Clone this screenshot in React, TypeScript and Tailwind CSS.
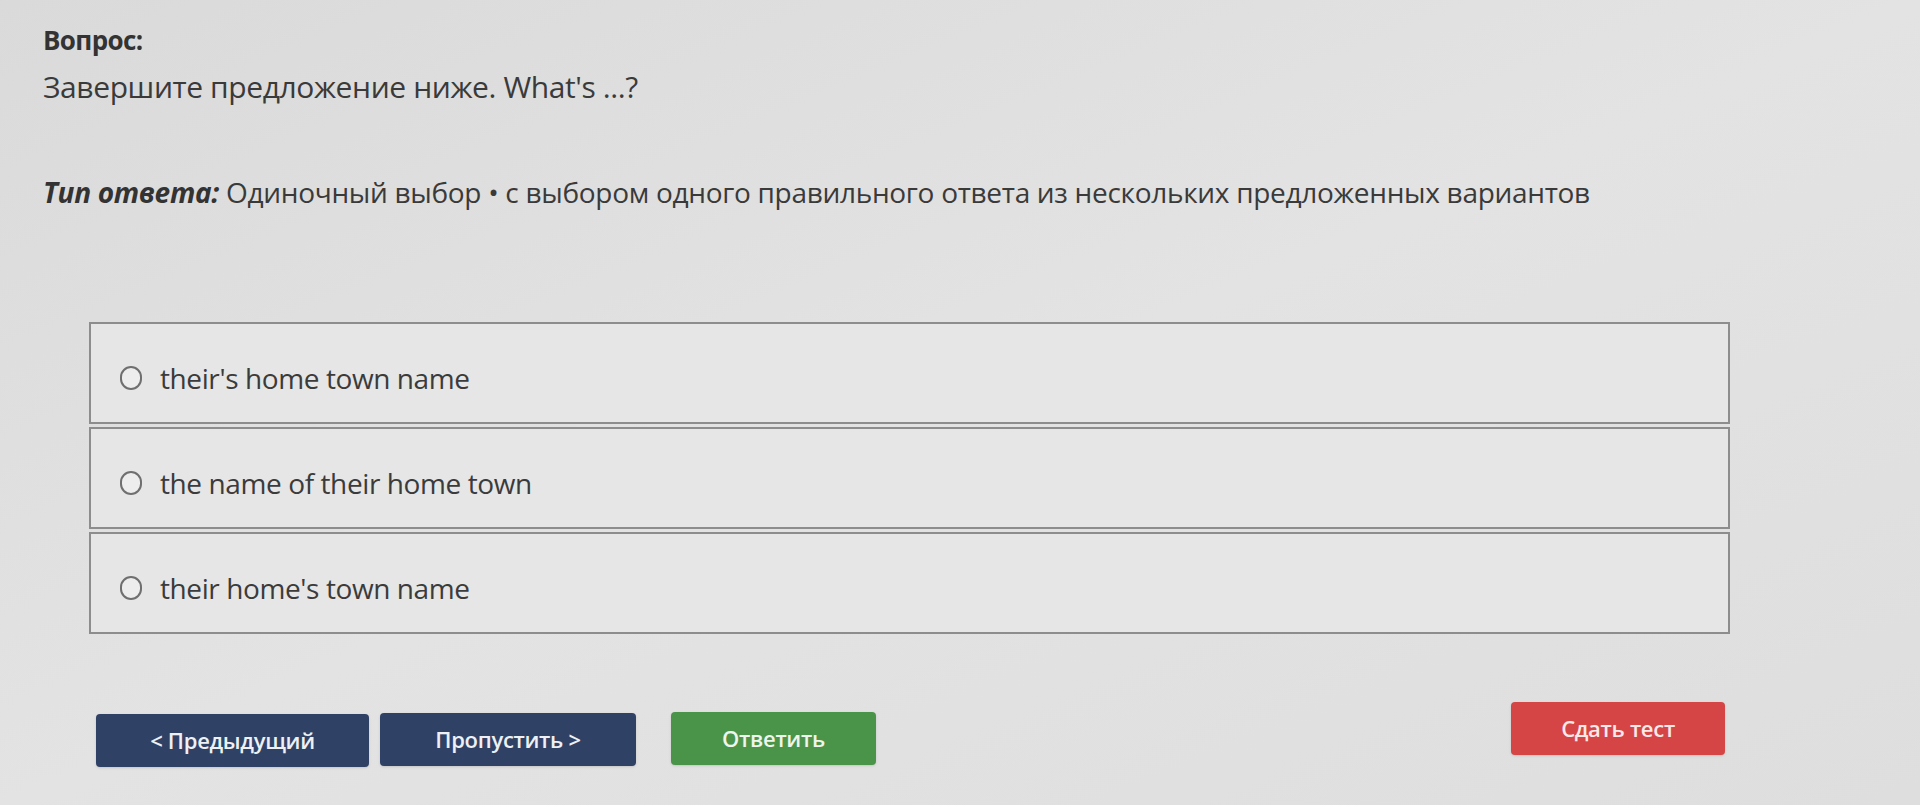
import React from 'react';

const options = [
  "their's home town name",
  'the name of their home town',
  "their home's town name",
];

export default function App() {
  return (
    <div className="w-full h-[805px] overflow-hidden bg-gradient-to-br from-[#dadada] via-[#e3e3e3] to-[#dedede] font-['Open_Sans',sans-serif] text-[#3a3a3a]">
      {/* Question header */}
      <div className="pl-[43px] pt-[24px]">
        <div className="text-[26px] font-bold leading-[32px] text-[#333] tracking-[-0.6px]">Вопрос:</div>
        <div className="mt-[12px] text-[30px] leading-[38px] tracking-[-0.4px]">Завершите предложение ниже. What's ...?</div>
        <div className="mt-[68px] text-[28px] leading-[36px] tracking-[-0.3px]">
          <span className="font-bold italic text-[#333]">Тип ответа:</span> Одиночный выбор • с выбором одного правильного ответа из нескольких предложенных вариантов
        </div>
      </div>

      {/* Options */}
      <div className="ml-[89px] mt-[112px] w-[1641px] flex flex-col gap-[3px]">
        {options.map((opt) => (
          <label
            key={opt}
            className="h-[102px] flex items-center gap-[18px] pl-[29px] pt-[10px] border-2 border-[#8d8d8d] bg-[#e6e6e6] cursor-pointer"
          >
            <span className="w-[22px] h-[24px] rounded-full border-2 border-[#6f6f6f] bg-[#ededed] shrink-0" />
            <span className="text-[28px] leading-[34px] text-[#3b3b3b] tracking-[-0.4px]">{opt}</span>
          </label>
        ))}
      </div>

      {/* Actions */}
      <div className="mt-[76px] pl-[96px] pr-[195px] flex items-center">
        <button className="mt-[4px] w-[273px] h-[53px] rounded-[4px] bg-[#2f4266] text-[#eef0f4] text-[22px] font-semibold tracking-[-0.3px] shadow-sm">
          &lt; Предыдущий
        </button>
        <button className="ml-[11px] mt-[2px] w-[256px] h-[53px] rounded-[4px] bg-[#2f4266] text-[#eef0f4] text-[22px] font-semibold tracking-[-0.3px] shadow-sm">
          Пропустить &gt;
        </button>
        <button className="ml-[35px] w-[205px] h-[53px] rounded-[4px] bg-[#4a9449] text-[#eef5ee] text-[22px] font-semibold tracking-[-0.3px] shadow-sm">
          Ответить
        </button>
        <button className="ml-auto -mt-[20px] w-[214px] h-[53px] rounded-[4px] bg-[#d54545] text-[#fbe9e9] text-[22px] font-semibold tracking-[-0.3px] shadow-sm">
          Сдать тест
        </button>
      </div>
    </div>
  );
}
